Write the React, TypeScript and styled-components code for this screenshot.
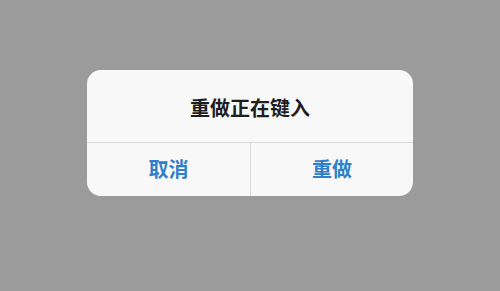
import React from "react";
import styled, { createGlobalStyle } from "styled-components";

const Global = createGlobalStyle`
  html, body { margin: 0; padding: 0; background: #9b9b9b; }
  * { box-sizing: border-box; }
`;

const Page = styled.div`
  width: 500px;
  height: 291px;
  background: #9b9b9b;
  padding: 70px 0 0 87px;
  font-family: "Noto Sans CJK SC", "Noto Sans", sans-serif;
`;

const Dialog = styled.div`
  width: 326px;
  height: 126px;
  background: #f8f8f8;
  border-radius: 14px;
  display: flex;
  flex-direction: column;
  overflow: hidden;
`;

const Title = styled.div`
  height: 73px;
  display: flex;
  align-items: center;
  justify-content: center;
  font-size: 20px;
  font-weight: 700;
  color: #1e1e1e;
  border-bottom: 1px solid #d9d9d9;
  padding-top: 2px;
`;

const Actions = styled.div`
  flex: 1;
  display: grid;
  grid-template-columns: 1fr 1fr;
`;

const Action = styled.button<{ $divider?: boolean }>`
  border: none;
  background: transparent;
  margin: 0;
  padding: 0 0 2px 0;
  font-family: inherit;
  font-size: 20px;
  font-weight: 700;
  color: #2f80c9;
  border-left: ${(p) => (p.$divider ? "1px solid #d9d9d9" : "none")};
  display: flex;
  align-items: center;
  justify-content: center;
`;

export default function App() {
  return (
    <>
      <Global />
      <Page>
        <Dialog>
          <Title>重做正在键入</Title>
          <Actions>
            <Action>取消</Action>
            <Action $divider>重做</Action>
          </Actions>
        </Dialog>
      </Page>
    </>
  );
}
